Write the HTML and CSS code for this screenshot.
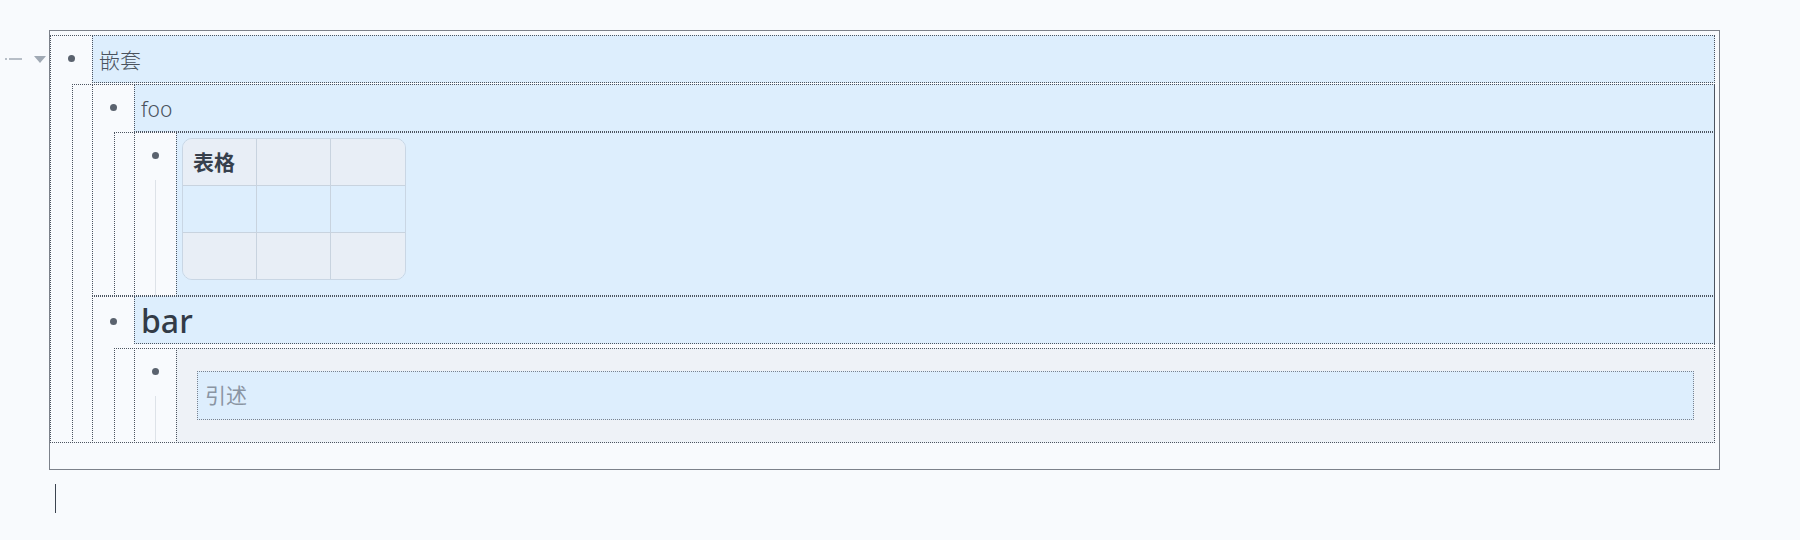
FILE: index.html
```html
<!DOCTYPE html>
<html lang="zh">
<head>
<meta charset="utf-8">
<title>嵌套</title>
<link rel="stylesheet" href="styles.css">
</head>
<body>
<div class="gutter"><span class="gut-dot"></span><span class="gut-dash"></span><span class="gut-arrow"></span></div>
<div class="editor">
  <div class="list">
    <div class="li">
      <div class="li-head">
        <div class="bullet"><span class="dot"></span></div>
        <div class="p">嵌套</div>
      </div>
      <div class="list nested first">
        <div class="li">
          <div class="li-head">
            <div class="bullet"><span class="dot"></span></div>
            <div class="p">foo</div>
          </div>
          <div class="list nested">
            <div class="li">
              <div class="li-head">
                <div class="bullet"><span class="dot"></span><span class="guide"></span></div>
                <div class="table-block">
                  <div class="table">
                    <div class="cell th">表格</div><div class="cell th"></div><div class="cell th end"></div>
                    <div class="cell"></div><div class="cell"></div><div class="cell end"></div>
                    <div class="cell alt last"></div><div class="cell alt last"></div><div class="cell alt last end"></div>
                  </div>
                </div>
              </div>
            </div>
          </div>
        </div>
        <div class="li">
          <div class="li-head">
            <div class="bullet heading-bullet"><span class="dot"></span></div>
            <div class="h2">bar</div>
          </div>
          <div class="list nested gap">
            <div class="li">
              <div class="li-head">
                <div class="bullet"><span class="dot"></span><span class="guide"></span></div>
                <div class="quote">
                  <div class="quote-p">引述</div>
                </div>
              </div>
            </div>
          </div>
        </div>
      </div>
    </div>
  </div>
</div>
<div class="caret"></div>
</body>
</html>
```

FILE: styles.css
```css
* { box-sizing: border-box; }
html, body {
  margin: 0;
  padding: 0;
  background: #f8fafd;
  font-family: "Noto Sans", "Noto Sans CJK SC", sans-serif;
  color: #434a55;
}
body { position: relative; width: 1800px; height: 540px; overflow: hidden; }

.gutter {
  position: absolute;
  left: 5px;
  top: 55px;
  display: flex;
  align-items: center;
  height: 8px;
}
.gut-dot { width: 2px; height: 2px; background: #b7bec7; }
.gut-dash { width: 13px; height: 1.5px; background: #b7bec7; margin-left: 2px; }
.gut-arrow {
  margin-left: 12px;
  width: 0; height: 0;
  border-left: 6px solid transparent;
  border-right: 6px solid transparent;
  border-top: 7px solid #a0a9b4;
}

.editor {
  margin: 30px 0 0 49px;
  width: 1671px;
  border: 1px solid #7c818a;
  padding: 4px 4px 26px 0;
}

.list, .li, .p, .h2, .table-block, .quote, .quote-p {
  outline: 1px dotted #4c5460;
  outline-offset: -1px;
}
.nested { margin-left: 22px; padding-left: 20px; }
.nested.first { margin-top: 1px; }
.nested.gap { margin-top: 4px; }

.li-head { display: flex; }
.bullet {
  width: 42px;
  flex: none;
  display: flex;
  flex-direction: column;
  align-items: center;
}
.dot {
  width: 7px; height: 7px;
  border-radius: 50%;
  background: #5a626e;
  margin-top: 20px;
  flex: none;
}
.heading-bullet .dot { margin-top: 22px; }
.guide {
  width: 1px;
  flex: 1;
  margin-top: 21px;
  background: #dde2e8;
}

.p {
  flex: 1;
  height: 48px;
  line-height: 48px;
  padding: 1px 0 0 7px;
  background: #ddeefd;
  font-size: 21px;
  font-weight: 300;
  color: #4a525d;
}
.h2 {
  flex: 1;
  height: 48px;
  line-height: 50px;
  padding-left: 7px;
  background: #ddeefd;
  font-size: 32px;
  font-weight: 500;
  color: #323b47;
}

.table-block {
  flex: 1;
  background: #ddeefd;
  padding: 6px 0 16px 6px;
}
.table {
  width: 224px;
  display: grid;
  grid-template-columns: repeat(3, 1fr);
  grid-template-rows: 47px 47px 46px;
  border: 1px solid #c9d6e4;
  border-radius: 10px;
  overflow: hidden;
}
.cell {
  border-right: 1px solid #c8d3df;
  border-bottom: 1px solid #c8d3df;
}
.cell.end { border-right: none; }
.cell.last { border-bottom: none; }
.th {
  background: #e8eef6;
  font-weight: 700;
  font-size: 21px;
  line-height: 46px;
  padding-left: 10px;
  color: #37404c;
}
.alt { background: #e8eef6; }

.quote {
  flex: 1;
  background: #eef2f7;
  padding: 23px 21px;
}
.quote-p {
  height: 49px;
  line-height: 48px;
  padding-left: 8px;
  background: #ddeefd;
  outline-color: #7a828e;
  font-size: 21px;
  color: #8a95a3;
}

.caret {
  margin: 14px 0 0 55px;
  width: 1px;
  height: 29px;
  background: #3c4450;
}
```
